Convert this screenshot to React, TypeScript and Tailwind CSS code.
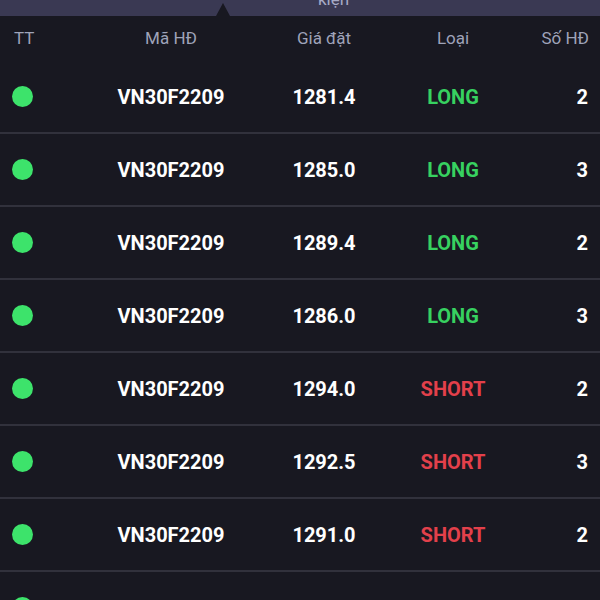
const rows = [
  { price: '1281.4', type: 'LONG', qty: 2 },
  { price: '1285.0', type: 'LONG', qty: 3 },
  { price: '1289.4', type: 'LONG', qty: 2 },
  { price: '1286.0', type: 'LONG', qty: 3 },
  { price: '1294.0', type: 'SHORT', qty: 2 },
  { price: '1292.5', type: 'SHORT', qty: 3 },
  { price: '1291.0', type: 'SHORT', qty: 2 },
  { price: '1288.4', type: 'SHORT', qty: 3 },
];

export default function App() {
  return (
    <div className="w-[600px] h-[600px] overflow-hidden bg-[#181821] font-['Roboto',sans-serif]">
      {/* tab strip, only its bottom edge is on screen */}
      <div className="relative h-[16px] bg-[#3a3953] overflow-hidden">
        <span className="absolute left-[318px] top-[-9px] text-[17px] leading-none text-[#a7aac6]">kiện</span>
        <div className="absolute left-[216px] bottom-0 w-0 h-0 border-l-[7px] border-r-[7px] border-b-[13px] border-l-transparent border-r-transparent border-b-[#181821]" />
      </div>

      <div className="grid grid-cols-[84px_150px_156px_102px_84px] items-center h-[45px] px-[12px] text-[17px] text-[#9fa3b9]">
        <div className="pl-[2px]">TT</div>
        <div className="text-center">Mã HĐ</div>
        <div className="text-center">Giá đặt</div>
        <div className="text-center">Loại</div>
        <div className="text-right -mr-[1px]">Số HĐ</div>
      </div>

      {rows.map((r, i) => (
        <div key={i}>
          <div className="grid grid-cols-[84px_150px_156px_102px_84px] items-center h-[71px] px-[12px] text-[20px] font-bold text-white">
            <div>
              <div className="w-[21px] h-[21px] rounded-full bg-[#3de36b]" />
            </div>
            <div className="text-center">VN30F2209</div>
            <div className="text-center">{r.price}</div>
            <div className={r.type === 'LONG' ? 'text-center text-[#37d160]' : 'text-center text-[#e3404b]'}>{r.type}</div>
            <div className="text-right">{r.qty}</div>
          </div>
          <div className="h-[2px] bg-[#31313c]" />
        </div>
      ))}
    </div>
  );
}
